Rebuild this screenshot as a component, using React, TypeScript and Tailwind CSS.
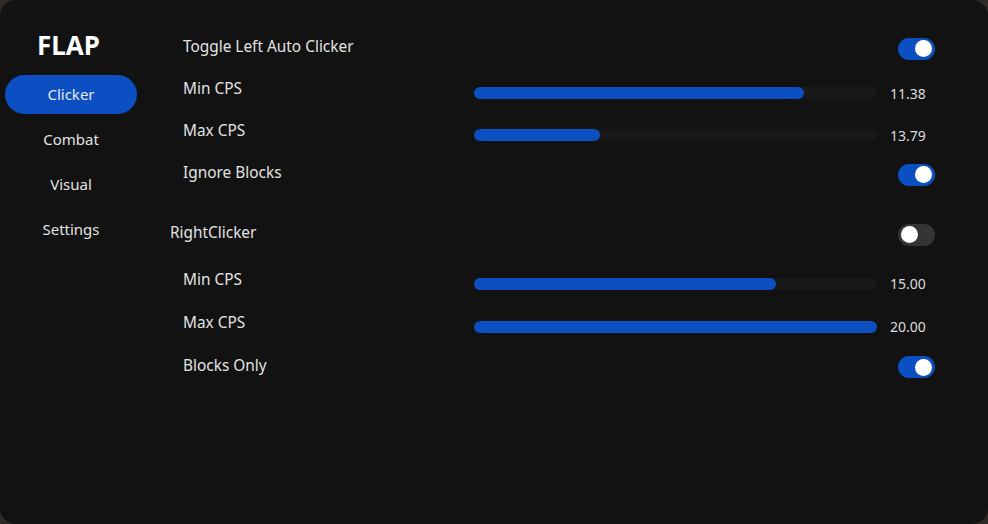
import { useState } from "react";

type Row =
  | { kind: "toggle"; label: string; on: boolean; rowClass: string; labelClass: string }
  | { kind: "slider"; label: string; value: string; pct: number; rowClass: string; labelClass: string };

const rows: Row[] = [
  { kind: "toggle", label: "Toggle Left Auto Clicker", on: true, rowClass: "h-[42px]", labelClass: "pl-[13px]" },
  { kind: "slider", label: "Min CPS", value: "11.38", pct: 81.9, rowClass: "h-[42px]", labelClass: "pl-[13px]" },
  { kind: "slider", label: "Max CPS", value: "13.79", pct: 31.3, rowClass: "h-[42px]", labelClass: "pl-[13px]" },
  { kind: "toggle", label: "Ignore Blocks", on: true, rowClass: "h-[42px]", labelClass: "pl-[13px]" },
  { kind: "toggle", label: "RightClicker", on: false, rowClass: "h-[42px] mt-[18px]", labelClass: "" },
  { kind: "slider", label: "Min CPS", value: "15.00", pct: 75, rowClass: "h-[43px] mt-[4px]", labelClass: "pl-[13px]" },
  { kind: "slider", label: "Max CPS", value: "20.00", pct: 100, rowClass: "h-[43px]", labelClass: "pl-[13px]" },
  { kind: "toggle", label: "Blocks Only", on: true, rowClass: "h-[43px]", labelClass: "pl-[13px]" },
];

const tabs = ["Clicker", "Combat", "Visual", "Settings"];

function Toggle({ on }: { on: boolean }) {
  return (
    <div
      className={
        on
          ? "mt-[1px] flex h-[22px] w-[37px] items-center justify-end rounded-full bg-[#0b4fc0] px-[3px]"
          : "mt-[1px] flex h-[22px] w-[37px] items-center justify-start rounded-full bg-[#333433] px-[3px]"
      }
    >
      <div className="h-[17px] w-[17px] rounded-full bg-white" />
    </div>
  );
}

function Slider({ pct, value }: { pct: number; value: string }) {
  return (
    <div className="mt-[6px] flex items-center">
      <div className="h-[12px] w-[403px] rounded-full bg-[#171817]">
        <div className="h-full rounded-full bg-[#0b4fc0]" style={{ width: `${pct}%` }} />
      </div>
      <span className="ml-[13px] w-[58px] text-[14px] text-[#dcdcdc]">{value}</span>
    </div>
  );
}

export default function App() {
  const [active] = useState("Clicker");

  return (
    <div
      className="h-[524px] w-[988px] bg-[#2e2924] text-[#e3e3e3]"
      style={{ fontFamily: '"Noto Sans", "Open Sans", sans-serif' }}
    >
      <div className="flex h-full w-full overflow-hidden rounded-[16px] bg-[#111211]">
        {/* Sidebar */}
        <div className="flex w-[170px] flex-col px-[5px] pt-[28px]">
          <div className="pl-[32px] text-[26px] font-bold leading-[34px] text-white">FLAP</div>
          <div className="mt-[10px] flex flex-col">
            {tabs.map((tab) => (
              <div key={tab} className="flex h-[45px] w-[132px] items-center">
                <div
                  className={
                    tab === active
                      ? "flex h-[39px] w-full items-center justify-center rounded-full bg-[#0b4fc2] text-[15px] text-[#e8e8e8]"
                      : "flex h-[39px] w-full items-center justify-center text-[15px] text-[#e3e3e3]"
                  }
                >
                  {tab}
                </div>
              </div>
            ))}
          </div>
        </div>

        {/* Settings list */}
        <div className="flex flex-1 flex-col pt-[27px]">
          {rows.map((row, i) => (
            <div key={i} className={`flex items-center ${row.rowClass}`}>
              <div className={`w-[304px] pb-[2px] text-[15.4px] ${row.labelClass}`}>{row.label}</div>
              {row.kind === "slider" ? (
                <Slider pct={row.pct} value={row.value} />
              ) : (
                <div className="flex w-[474px] justify-end pr-[13px]">
                  <Toggle on={row.on} />
                </div>
              )}
            </div>
          ))}
        </div>
      </div>
    </div>
  );
}
